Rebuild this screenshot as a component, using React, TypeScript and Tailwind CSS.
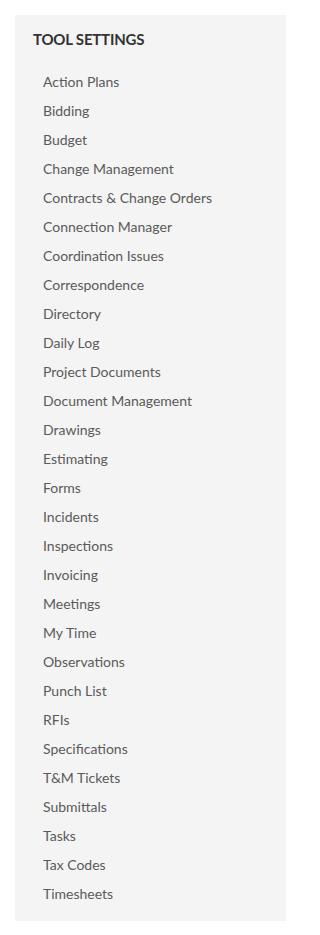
const tools: string[] = [
  "Action Plans",
  "Bidding",
  "Budget",
  "Change Management",
  "Contracts & Change Orders",
  "Connection Manager",
  "Coordination Issues",
  "Correspondence",
  "Directory",
  "Daily Log",
  "Project Documents",
  "Document Management",
  "Drawings",
  "Estimating",
  "Forms",
  "Incidents",
  "Inspections",
  "Invoicing",
  "Meetings",
  "My Time",
  "Observations",
  "Punch List",
  "RFIs",
  "Specifications",
  "T&M Tickets",
  "Submittals",
  "Tasks",
  "Tax Codes",
  "Timesheets",
];

export default function App() {
  return (
    <div className="bg-white p-[15px] font-['Lato','Liberation_Sans',sans-serif]">
      <div className="w-[271px] bg-[#f4f4f4] pt-[14px] pb-[13px] pl-[18px]">
        <h2 className="text-[15px] leading-[20px] font-bold uppercase text-[#333333] tracking-[-0.2px]">
          Tool Settings
        </h2>
        <ul className="mt-[18px] pl-[10px]">
          {tools.map((t) => (
            <li key={t} className="text-[14px] leading-[29px] text-[#5a5a5a]">
              <a href="#" className="hover:underline">{t}</a>
            </li>
          ))}
        </ul>
      </div>
    </div>
  );
}
